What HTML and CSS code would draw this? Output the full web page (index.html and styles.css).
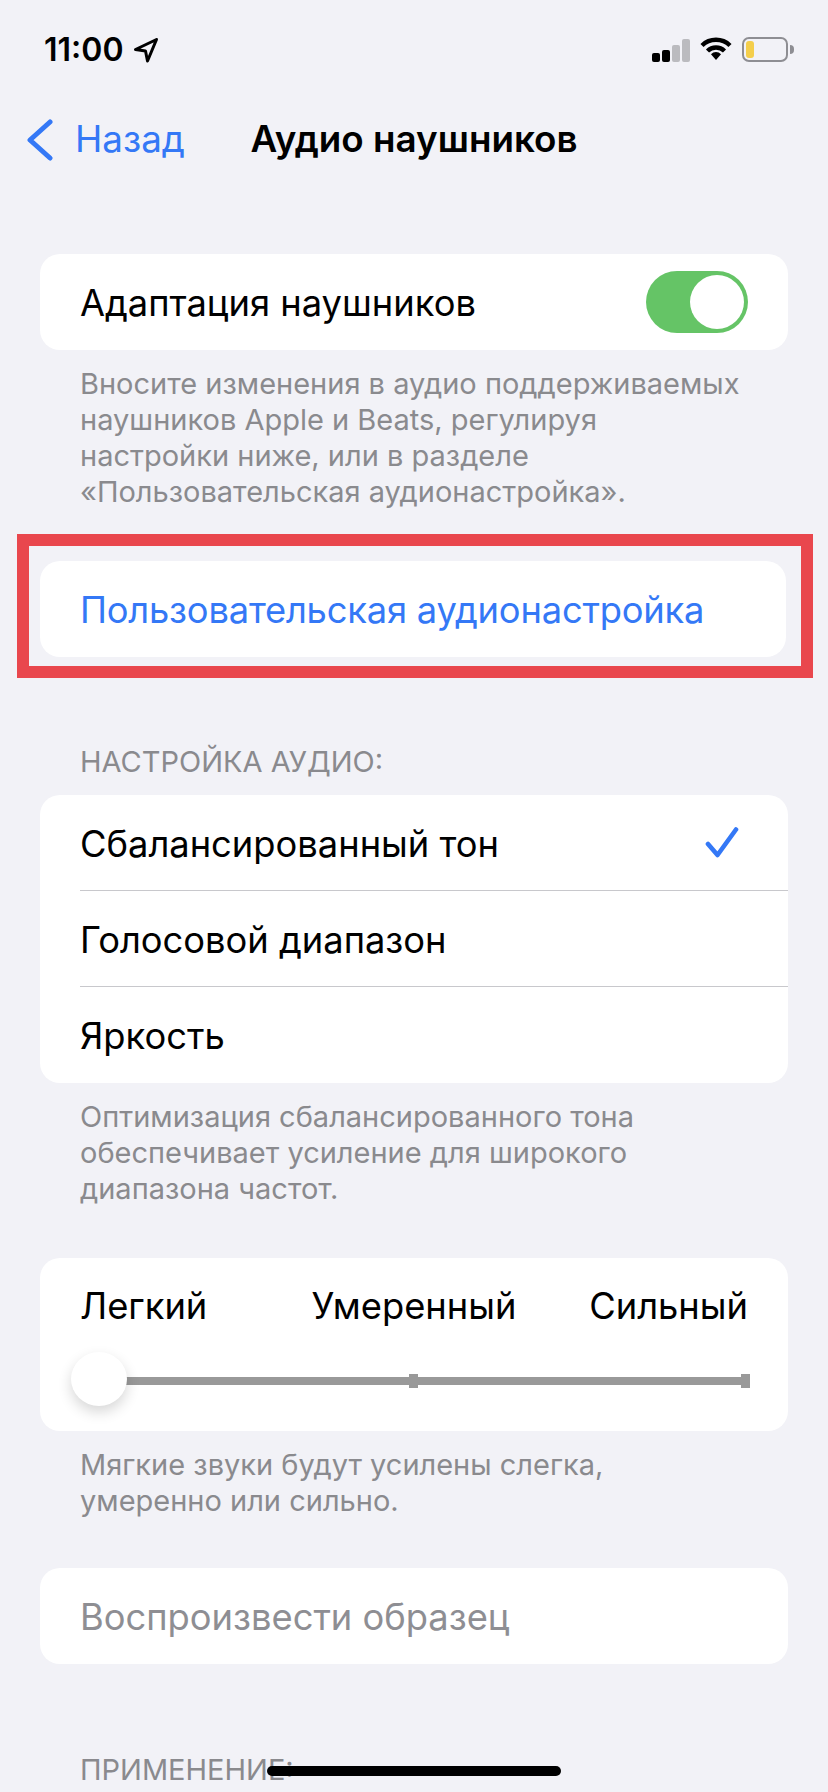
FILE: index.html
```html
<!DOCTYPE html>
<html lang="ru">
<head>
    <meta charset="UTF-8">
    <meta name="viewport" content="width=device-width, initial-scale=1.0">
    <title>Аудио наушников</title>
    <link rel="stylesheet" href="styles.css">
</head>
<body>
    <div class="status-bar">
        <div class="status-left">
            <span class="time">11:00</span>
            <svg class="location" width="26" height="26" viewBox="0 0 26 26"><path d="M23.5 2.5 L2.5 12.5 L12.5 14 L14.5 24 Z" fill="none" stroke="#000" stroke-width="3" stroke-linejoin="round"/></svg>
        </div>
        <div class="status-right">
            <div class="signal">
                <span class="bar bar-1"></span>
                <span class="bar bar-2"></span>
                <span class="bar bar-3"></span>
                <span class="bar bar-4"></span>
            </div>
            <svg class="wifi" width="32" height="24" viewBox="0 0 32 24">
                <path d="M2 8.5 A20 20 0 0 1 30 8.5" fill="none" stroke="#000" stroke-width="4.4"/>
                <path d="M7.5 14 A12 12 0 0 1 24.5 14" fill="none" stroke="#000" stroke-width="4.4"/>
                <path d="M11 17.2 A7 7 0 0 1 21 17.2 L16 23 Z" fill="#000"/>
            </svg>
            <div class="battery"><span class="battery-level"></span></div>
            <span class="battery-nub"></span>
        </div>
    </div>

    <div class="nav-bar">
        <div class="back">
            <svg width="28" height="42" viewBox="0 0 28 42"><path d="M24 3 L4 21 L24 39" fill="none" stroke="#3478f6" stroke-width="5" stroke-linecap="round" stroke-linejoin="round"/></svg>
            <span class="nav-text">Назад</span>
        </div>
        <div class="nav-title"><span class="nav-text">Аудио наушников</span></div>
    </div>

    <div class="content">
        <div class="card first-card">
            <div class="row">
                <span>Адаптация наушников</span>
                <div class="toggle"><span class="knob"></span></div>
            </div>
        </div>
        <p class="note">Вносите изменения в аудио поддерживаемых<br>наушников Apple и Beats, регулируя<br>настройки ниже, или в разделе<br>«Пользовательская аудионастройка».</p>

        <div class="highlight">
            <div class="card">
                <div class="row link">Пользовательская аудионастройка</div>
            </div>
        </div>

        <h2 class="section-title tone-title">НАСТРОЙКА АУДИО:</h2>
        <div class="card">
            <div class="row divided">
                <span>Сбалансированный тон</span>
                <svg class="check" width="36" height="34" viewBox="0 0 36 34"><path d="M3 18 L12.5 29 L31 3.5" fill="none" stroke="#3478f6" stroke-width="4.6" stroke-linecap="round" stroke-linejoin="round"/></svg>
            </div>
            <div class="row divided">Голосовой диапазон</div>
            <div class="row">Яркость</div>
        </div>
        <p class="note">Оптимизация сбалансированного тона<br>обеспечивает усиление для широкого<br>диапазона частот.</p>

        <div class="card slider-card">
            <div class="slider-labels">
                <span>Легкий</span>
                <span>Умеренный</span>
                <span class="label-end">Сильный</span>
            </div>
            <div class="slider">
                <div class="track">
                    <span class="tick"></span>
                    <span class="tick"></span>
                </div>
                <span class="thumb"></span>
            </div>
        </div>
        <p class="note">Мягкие звуки будут усилены слегка,<br>умеренно или сильно.</p>

        <div class="card sample-card">
            <div class="row muted">Воспроизвести образец</div>
        </div>

        <h2 class="section-title apply-title">ПРИМЕНЕНИЕ:</h2>
    </div>

    <div class="home-bar"></div>
</body>
</html>
```

FILE: styles.css
```css
* {
    box-sizing: border-box;
}

body {
    margin: 0;
    width: 828px;
    height: 1792px;
    overflow: hidden;
    position: relative;
    background-color: #f2f2f7;
    color: #000;
    font-family: Inter, "Liberation Sans", sans-serif;
    font-size: 36.3px;
}

/* status bar */
.status-bar {
    height: 100px;
    padding: 32px 34px 0 44px;
    display: flex;
    justify-content: space-between;
    align-items: flex-start;
}

.status-left {
    display: flex;
    align-items: center;
    gap: 10px;
    height: 36px;
}

.time {
    font-size: 32px;
    font-weight: 600;
    line-height: 36px;
}

.status-right {
    display: flex;
    align-items: flex-start;
    padding-top: 5px;
}

.signal {
    display: flex;
    align-items: flex-end;
    gap: 2px;
    height: 24px;
    margin-top: 1px;
    margin-right: 10px;
}

.bar {
    width: 8px;
    border-radius: 2px;
    background-color: #000;
}

.bar-1 { height: 9px; }
.bar-2 { height: 12px; }
.bar-3 { height: 17px; background-color: #bbbbbf; }
.bar-4 { height: 23px; background-color: #bbbbbf; }

.wifi {
    margin-right: 10px;
}

.battery {
    width: 46px;
    height: 25px;
    border: 2px solid #8e8e93;
    border-radius: 7px;
    padding: 2px;
}

.battery-level {
    display: block;
    width: 8px;
    height: 17px;
    border-radius: 3px;
    background-color: #f4ce4b;
}

.battery-nub {
    width: 4px;
    height: 9px;
    margin: 8px 0 0 2px;
    border-radius: 0 4px 4px 0;
    background-color: #8e8e93;
}

/* nav */
.nav-bar {
    height: 80px;
    display: flex;
    align-items: center;
    position: relative;
    padding-left: 26px;
    font-size: 36.8px;
}

.nav-text {
    display: block;
    margin-top: -3px;
}

.back {
    display: flex;
    align-items: center;
    gap: 21px;
    color: #3478f6;
}

.nav-title {
    position: absolute;
    left: 0;
    right: 0;
    text-align: center;
    font-weight: 600;
}

.content {
    padding: 74px 40px 0;
}

.card {
    background-color: #fff;
    border-radius: 20px;
    overflow: hidden;
}

.row {
    height: 96px;
    margin-left: 40px;
    padding-top: 2px;
    padding-right: 40px;
    display: flex;
    align-items: center;
    justify-content: space-between;
}

.divided {
    height: 96px;
    border-bottom: 1px solid #c8c8cc;
}

.link {
    color: #3478f6;
    letter-spacing: -0.2px;
}

.muted {
    color: #8e8e93;
}

/* toggle */
.toggle {
    width: 102px;
    height: 62px;
    margin-top: -2px;
    border-radius: 31px;
    padding: 4px;
    display: flex;
    justify-content: flex-end;
    background-color: #65c466;
}

.knob {
    width: 54px;
    height: 54px;
    border-radius: 50%;
    background-color: #fff;
}

.check {
    margin-top: -2px;
    margin-right: 7px;
}

.note {
    margin: 0;
    padding: 16px 0 0 40px;
    font-size: 29px;
    line-height: 36px;
    color: #8a8a8e;
}

/* red frame */
.highlight {
    margin: 24px -25px 0 -23px;
    padding: 15px 15px 9px 11px;
    border: 12px solid #e9474d;
}

.section-title {
    margin: 0;
    padding-left: 40px;
    font-size: 29px;
    font-weight: 400;
    line-height: 36px;
    color: #8a8a8e;
}

.tone-title {
    margin-top: 66px;
    margin-bottom: 15px;
}

.apply-title {
    margin-top: 88px;
}

/* slider */
.slider-card {
    margin-top: 51px;
    height: 173px;
    padding: 28px 40px 0 40px;
}

.slider-labels {
    display: grid;
    grid-template-columns: 1fr auto 1fr;
    line-height: 40px;
}

.label-end {
    text-align: right;
}

.slider {
    position: relative;
    height: 54px;
    margin-top: 26px;
}

.track {
    position: absolute;
    left: 0;
    right: -2px;
    top: 25px;
    height: 8px;
    background-color: #999;
}

.tick {
    position: absolute;
    top: -3px;
    width: 9px;
    height: 14px;
    background-color: #999;
}

.tick:first-child {
    left: 329px;
}

.tick:last-child {
    right: 0;
}

.thumb {
    position: absolute;
    left: -9px;
    top: 0;
    width: 56px;
    height: 54px;
    border-radius: 50%;
    background-color: #fff;
    box-shadow: 0 6px 14px rgba(0, 0, 0, 0.16);
}

.sample-card {
    margin-top: 49px;
}

.home-bar {
    position: absolute;
    left: 267px;
    top: 1766px;
    width: 294px;
    height: 10px;
    border-radius: 5px;
    background-color: #000;
}
```
